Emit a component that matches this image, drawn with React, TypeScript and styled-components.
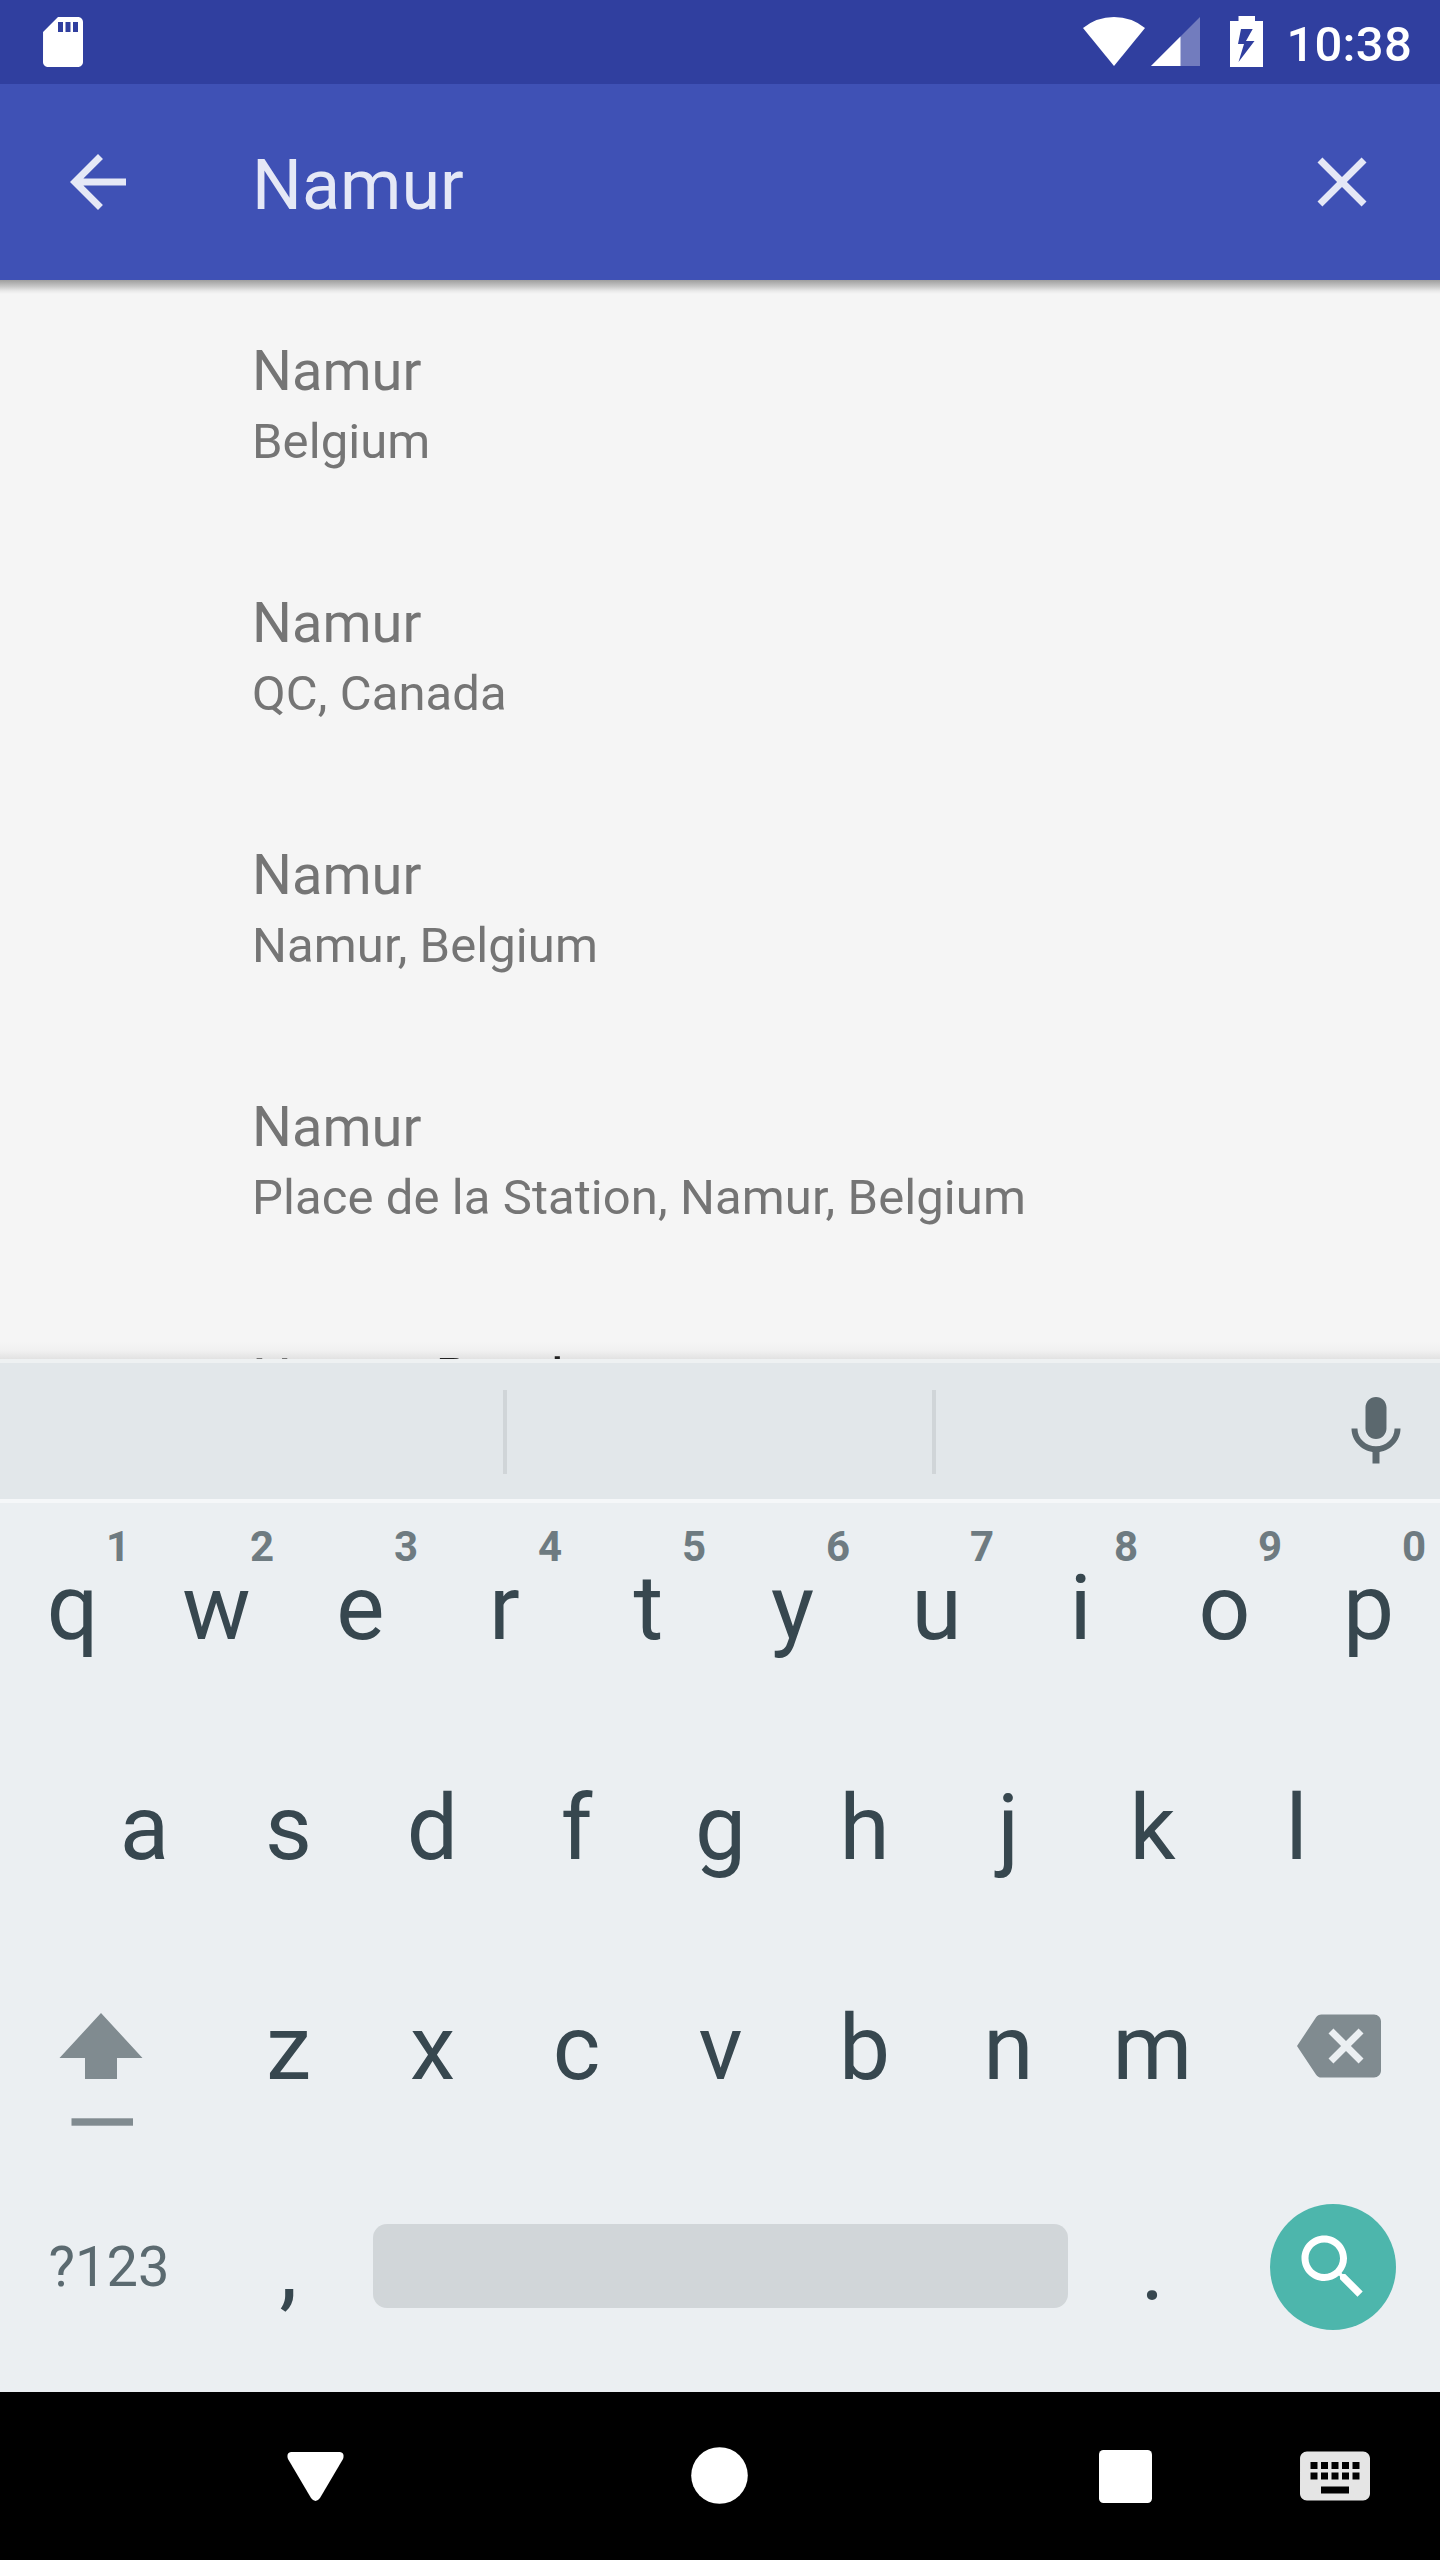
import React from "react";
import styled, { createGlobalStyle } from "styled-components";

const GlobalStyle = createGlobalStyle`
  *, *::before, *::after { box-sizing: border-box; }
  body { margin: 0; background: #000; }
  svg { display: block; flex: none; }
`;

const Screen = styled.div`
  width: 1440px;
  height: 2560px;
  display: flex;
  flex-direction: column;
  overflow: hidden;
  font-family: Roboto, "Noto Sans", sans-serif;
  background: #f5f5f5;
`;

const StatusBar = styled.header`
  height: 84px;
  flex: none;
  display: flex;
  justify-content: space-between;
  padding: 0 28px 0 33px;
  background: #303f9f;
  color: #fff;
`;

const StatusGroup = styled.div`
  display: flex;
  align-items: center;
`;

const Clock = styled.span`
  margin-left: 22.6px;
  padding-top: 5px;
  font-size: 49px;
  font-weight: 500;
  line-height: 58px;
  letter-spacing: 0.25px;
`;

const AppBar = styled.div`
  height: 196px;
  flex: none;
  display: flex;
  align-items: center;
  padding: 0 56px;
  background: #3f51b5;
  color: #e5e8f6;
`;

const Query = styled.div`
  flex: 1;
  padding: 6px 0 0 112px;
  font-size: 70px;
  line-height: 82px;
`;

const Results = styled.main`
  height: 1079px;
  flex: none;
  overflow: hidden;
  background:
    linear-gradient(#9e9e9e 0, #c4c4c4 6px, #e9e9e9 11px, rgba(245, 245, 245, 0) 14px) top / 100% 14px no-repeat,
    linear-gradient(rgba(226, 226, 226, 0), #f0f0f0 10px, #e2e2e2) bottom / 100% 18px no-repeat,
    #f5f5f5;
`;

const ResultRow = styled.div`
  height: 252px;
  padding: 58px 56px 0 252px;
  color: #757575;
`;

const Primary = styled.div`
  font-size: 56px;
  line-height: 66px;
`;

const Rest = styled.span`
  color: #212121;
`;

const Secondary = styled.div`
  margin-top: 9px;
  font-size: 49px;
  line-height: 58px;
  letter-spacing: 0.08px;
`;

const Keyboard = styled.section`
  height: 1033px;
  flex: none;
  background: #ebeff2;
  color: #37474f;
`;

const Suggestions = styled.div`
  height: 144px;
  display: grid;
  grid-template-columns: 503px 4px 425px 4px 1fr;
  border-top: 4px solid #eef1f2;
  border-bottom: 4px solid #f5f7f9;
  background: #e2e7ea;
`;

const Divider = styled.i<{ $column: number }>`
  grid-column: ${(p) => p.$column};
  height: 84px;
  margin-top: 27px;
  background: #d0d5d8;
`;

const MicCell = styled.div`
  grid-column: 5;
  display: flex;
  align-items: center;
  justify-content: flex-end;
  padding: 2px 22px 0 0;
  color: #5b686e;
`;

const KeyRow = styled.div<{ $height?: number; $inset?: number }>`
  display: flex;
  height: ${(p) => p.$height ?? 220}px;
  padding: 0 ${(p) => p.$inset ?? 0}px;
`;

const Key = styled.div<{ $line?: number }>`
  position: relative;
  width: 144px;
  flex: none;
  padding-left: 1px;
  text-align: center;
  font-size: 91px;
  line-height: ${(p) => p.$line ?? 220}px;
`;

const Hint = styled.span`
  position: absolute;
  top: 23px;
  right: 14px;
  font-size: 42px;
  font-weight: 700;
  line-height: 42px;
  color: #6e7b81;
`;

const SymbolKey = styled.div`
  width: 216px;
  flex: none;
  padding-left: 2px;
  text-align: center;
  font-size: 56px;
  line-height: 218px;
  color: #5b6a70;
`;

const WideKey = styled.div<{ $shift?: number; $drop?: number }>`
  width: 216px;
  height: 216px;
  flex: none;
  display: flex;
  align-items: center;
  justify-content: center;
  padding: ${(p) => p.$drop ?? 0}px 0 0 ${(p) => p.$shift ?? 0}px;
  color: #808b90;
`;

const ShiftKey = styled.div`
  width: 216px;
  flex: none;
  padding: 75px 0 0 59px;
  color: #808b90;
`;

const SpaceKey = styled.div`
  width: 695px;
  height: 84px;
  flex: none;
  margin: 66px 12px 0 13px;
  border-radius: 14px;
  background: #d1d6d9;
`;

const SearchButton = styled.div`
  width: 126px;
  height: 126px;
  display: grid;
  place-items: center;
  border-radius: 50%;
  background: #4db6ac;
  color: #fff;
`;

const NavBar = styled.nav`
  height: 168px;
  flex: none;
  display: flex;
  align-items: center;
  background: #000;
  color: #fff;
`;

const NavItem = styled.div<{ $gap: number; $top?: number; $bottom?: number; $color?: string }>`
  margin-left: ${(p) => p.$gap}px;
  padding-top: ${(p) => p.$top ?? 0}px;
  padding-bottom: ${(p) => p.$bottom ?? 0}px;
  color: ${(p) => p.$color ?? "#fff"};
`;

function Glyph({ d, size = 84 }: { d: string; size?: number }) {
  return (
    <svg width={size} height={size} viewBox="0 0 24 24" fill="currentColor">
      <path d={d} />
    </svg>
  );
}

const icons = {
  sd: "M18 2h-8L4.02 8 4 20c0 1.1.9 2 2 2h12c1.1 0 2-.9 2-2V4c0-1.1-.9-2-2-2zm-6 6h-2V4h2v4zm3 0h-2V4h2v4zm3 0h-2V4h2v4z",
  back: "M20 11H7.83l5.59-5.59L12 4l-8 8 8 8 1.41-1.41L7.83 13H20v-2z",
  close: "M19 6.41L17.59 5 12 10.59 6.41 5 5 6.41 10.59 12 5 17.59 6.41 19 12 13.41 17.59 19 19 17.59 13.41 12z",
  mic: "M12 14c1.66 0 2.99-1.34 2.99-3L15 5c0-1.66-1.34-3-3-3S9 3.34 9 5v6c0 1.66 1.34 3 3 3zm5.3-3c0 3-2.54 5.1-5.3 5.1S6.7 14 6.7 11H5c0 3.41 2.72 6.23 6 6.72V21h2v-3.28c3.28-.48 6-3.3 6-6.72h-1.7z",
  backspace:
    "M22 3H7c-.69 0-1.23.35-1.59.88L0 12l5.41 8.11c.36.53.9.89 1.59.89h15c1.1 0 2-.9 2-2V5c0-1.1-.9-2-2-2zm-3 12.59L17.59 17 14 13.41 10.41 17 9 15.59 12.59 12 9 8.41 10.41 7 14 10.59 17.59 7 19 8.41 15.41 12 19 15.59z",
  search:
    "M15.5 14h-.79l-.28-.27C15.41 12.59 16 11.11 16 9.5 16 5.91 13.09 3 9.5 3S3 5.91 3 9.5 5.91 16 9.5 16c1.61 0 3.09-.59 4.23-1.57l.27.28v.79l5 4.99L20.49 19l-4.99-5zm-6 0C7.01 14 5 11.99 5 9.5S7.01 5 9.5 5 14 7.01 14 9.5 11.99 14 9.5 14z",
  keyboard:
    "M20 5H4c-1.1 0-1.99.9-1.99 2L2 17c0 1.1.9 2 2 2h16c1.1 0 2-.9 2-2V7c0-1.1-.9-2-2-2zm-9 3h2v2h-2V8zm0 3h2v2h-2v-2zM8 8h2v2H8V8zm0 3h2v2H8v-2zm-1 2H5v-2h2v2zm0-3H5V8h2v2zm9 7H8v-2h8v2zm0-4h-2v-2h2v2zm0-3h-2V8h2v2zm3 3h-2v-2h2v2zm0-3h-2V8h2v2z",
};

const places = ["Belgium", "QC, Canada", "Namur, Belgium", "Place de la Station, Namur, Belgium"];

export default function App() {
  return (
    <Screen>
      <GlobalStyle />
      <StatusBar>
        <StatusGroup>
          <Glyph d={icons.sd} size={60} />
        </StatusGroup>
        <StatusGroup>
          <svg width="181" height="84" viewBox="1082 0 181 84" fill="#fff">
            <path d="M1113 66L1082 28Q1095.500 17 1113 17T1144 28Z" />
            <path d="M1199 17V66H1150Z" fillOpacity=".32" />
            <path d="M1179.500 36.500V66H1150Z" />
            <path
              fillRule="evenodd"
              d="M1237.500 16H1254V21H1262V67H1229V21H1237.500ZM1240 29L1237 44H1243L1237.500 62L1253.500 41H1245L1251.700 29Z"
            />
          </svg>
          <Clock>10:38</Clock>
        </StatusGroup>
      </StatusBar>

      <AppBar>
        <Glyph d={icons.back} />
        <Query>Namur</Query>
        <Glyph d={icons.close} />
      </AppBar>

      <Results>
        {places.map((place) => (
          <ResultRow key={place}>
            <Primary>Namur</Primary>
            <Secondary>{place}</Secondary>
          </ResultRow>
        ))}
        <ResultRow>
          <Primary>
            Namur<Rest> Road</Rest>
          </Primary>
        </ResultRow>
      </Results>

      <Keyboard>
        <Suggestions>
          <Divider $column={2} />
          <Divider $column={4} />
          <MicCell>
            <Glyph d={icons.mic} />
          </MicCell>
        </Suggestions>
        <KeyRow $height={215}>
          {[..."qwertyuiop"].map((letter, i) => (
            <Key key={letter} $line={210}>
              {letter}
              <Hint>{(i + 1) % 10}</Hint>
            </Key>
          ))}
        </KeyRow>
        <KeyRow $inset={72}>
          {[..."asdfghjkl"].map((letter) => (
            <Key key={letter}>{letter}</Key>
          ))}
        </KeyRow>
        <KeyRow>
          <ShiftKey>
            <svg width="84" height="114" viewBox="0 0 84 114" fill="currentColor">
              <path d="M42 0L83.500 45H58V66H26V45H.5Z" />
              <rect x="12.500" y="105.300" width="61.500" height="7.400" />
            </svg>
          </ShiftKey>
          {[..."zxcvbnm"].map((letter) => (
            <Key key={letter}>{letter}</Key>
          ))}
          <WideKey $shift={14}>
            <Glyph d={icons.backspace} />
          </WideKey>
        </KeyRow>
        <KeyRow $height={234}>
          <SymbolKey>?123</SymbolKey>
          <Key>,</Key>
          <SpaceKey />
          <Key>.</Key>
          <WideKey $shift={1} $drop={1}>
            <SearchButton>
              <Glyph d={icons.search} />
            </SearchButton>
          </WideKey>
        </KeyRow>
      </Keyboard>

      <NavBar>
        <NavItem $gap={287}>
          <svg width="57" height="49" viewBox="0 0 57 49" fill="currentColor">
            <path d="M4 0H53Q58 1 56 7L33 46Q28.500 52 24 46L1 7Q-1 1 4 0Z" />
          </svg>
        </NavItem>
        <NavItem $gap={347} $bottom={1}>
          <svg width="57" height="57" viewBox="0 0 57 57" fill="currentColor">
            <circle cx="28.500" cy="28.500" r="28.300" />
          </svg>
        </NavItem>
        <NavItem $gap={351} $top={1}>
          <svg width="53" height="53" viewBox="0 0 53 53" fill="currentColor">
            <rect width="53" height="53" rx="4.500" />
          </svg>
        </NavItem>
        <NavItem $gap={141} $color="#e5e5e5">
          <Glyph d={icons.keyboard} />
        </NavItem>
      </NavBar>
    </Screen>
  );
}
